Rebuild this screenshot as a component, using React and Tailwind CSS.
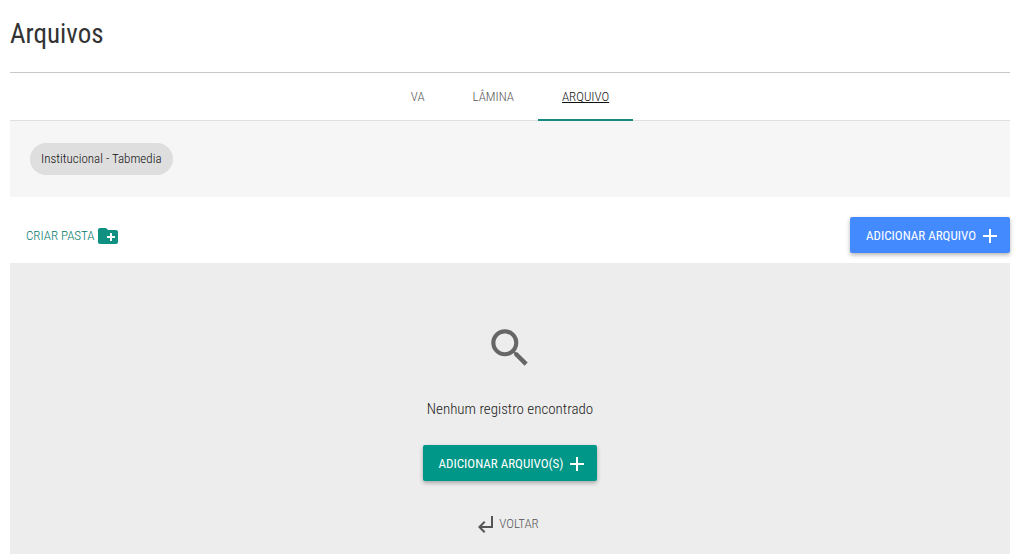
import { useState } from 'react';
import { MdAdd, MdCreateNewFolder, MdSearch, MdSubdirectoryArrowLeft } from 'react-icons/md';

const tabs = ['VA', 'Lâmina', 'Arquivo'];

function Arquivos() {
  const [activeTab, setActiveTab] = useState('Arquivo');

  return (
    <div className="min-h-screen flex flex-col bg-white pl-[10px] pr-[9px] font-['Roboto_Condensed','Liberation_Sans',sans-serif] font-light text-[13px]">
      <header className="pt-4 pb-5 border-b border-[#c8c8c8]">
        <h1 className="text-[27px] leading-9 font-normal text-[#333333]">Arquivos</h1>
      </header>

      {/* Tabs */}
      <nav className="flex justify-center h-12 border-b border-[#e0e0e0]">
        {tabs.map((tab) => (
          <button
            key={tab}
            type="button"
            onClick={() => setActiveTab(tab)}
            className={`h-12 px-6 pt-[2px] border-b-2 uppercase ${
              activeTab === tab
                ? 'border-[#148c80] text-[#111111] underline'
                : 'border-transparent text-[#555555]'
            }`}
          >
            {tab}
          </button>
        ))}
      </nav>

      {/* Breadcrumb */}
      <div className="h-[76px] px-5 flex items-center bg-[#f6f6f6]">
        <button type="button" className="h-8 px-[11px] rounded-full bg-[#dedede] text-[#111111]">
          Institucional - Tabmedia
        </button>
      </div>

      {/* Actions */}
      <div className="flex justify-between items-center pt-5 pb-[10px]">
        <button type="button" className="h-9 px-4 pt-px flex items-center gap-[2px] text-[#00796b] uppercase">
          Criar pasta
          <MdCreateNewFolder className="size-6 text-[#0f9080]" />
        </button>
        <button type="button" className="h-9 pl-4 pr-2 pt-px flex items-center gap-[2px] rounded-xs bg-[#448aff] text-white font-normal uppercase shadow-[0_2px_4px_rgba(0,0,0,0.3)]">
          Adicionar arquivo
          <MdAdd className="size-6" />
        </button>
      </div>

      {/* Empty state */}
      <main className="grow flex flex-col items-center bg-[#ededed] pt-[60px]">
        <MdSearch className="size-[50px] text-[#666666]" />
        <p className="mt-6 text-[15px] leading-6 text-[#212121]">Nenhum registro encontrado</p>
        <button type="button" className="mt-6 h-9 pl-4 pr-2 pt-px flex items-center gap-[2px] rounded-xs bg-[#009688] text-white font-normal uppercase shadow-[0_2px_4px_rgba(0,0,0,0.3)]">
          Adicionar arquivo(s)
          <MdAdd className="size-6" />
        </button>
        <button type="button" className="mt-6 h-9 pt-px pr-2 flex items-center gap-[2px] text-[#555555] uppercase">
          <MdSubdirectoryArrowLeft className="size-6" />
          Voltar
        </button>
      </main>
    </div>
  );
}

export default Arquivos;
